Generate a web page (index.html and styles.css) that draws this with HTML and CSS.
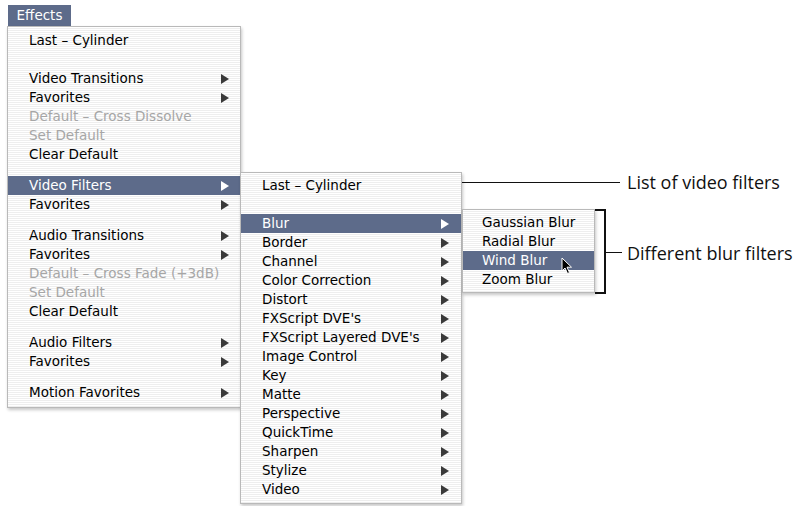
FILE: index.html
```html
<!DOCTYPE html>
<html>
<head>
<meta charset="utf-8">
<link rel="stylesheet" href="styles.css">
</head>
<body>
<div class="canvas">
  <div class="tab">Effects</div>

  <div class="menu menu-main">
    <div class="item">Last – Cylinder</div>
    <div class="blank"></div>
    <div class="item sub">Video Transitions<span class="arr"></span></div>
    <div class="item sub">Favorites<span class="arr"></span></div>
    <div class="item dis">Default – Cross Dissolve</div>
    <div class="item dis">Set Default</div>
    <div class="item">Clear Default</div>
    <div class="sep"></div>
    <div class="item sub hi">Video Filters<span class="arr"></span></div>
    <div class="item sub">Favorites<span class="arr"></span></div>
    <div class="sep"></div>
    <div class="item sub">Audio Transitions<span class="arr"></span></div>
    <div class="item sub">Favorites<span class="arr"></span></div>
    <div class="item dis">Default – Cross Fade (+3dB)</div>
    <div class="item dis">Set Default</div>
    <div class="item">Clear Default</div>
    <div class="sep"></div>
    <div class="item sub">Audio Filters<span class="arr"></span></div>
    <div class="item sub">Favorites<span class="arr"></span></div>
    <div class="sep"></div>
    <div class="item sub">Motion Favorites<span class="arr"></span></div>
  </div>

  <div class="menu menu-filters">
    <div class="item">Last – Cylinder</div>
    <div class="blank2"></div>
    <div class="item sub hi">Blur<span class="arr"></span></div>
    <div class="item sub">Border<span class="arr"></span></div>
    <div class="item sub">Channel<span class="arr"></span></div>
    <div class="item sub">Color Correction<span class="arr"></span></div>
    <div class="item sub">Distort<span class="arr"></span></div>
    <div class="item sub">FXScript DVE's<span class="arr"></span></div>
    <div class="item sub">FXScript Layered DVE's<span class="arr"></span></div>
    <div class="item sub">Image Control<span class="arr"></span></div>
    <div class="item sub">Key<span class="arr"></span></div>
    <div class="item sub">Matte<span class="arr"></span></div>
    <div class="item sub">Perspective<span class="arr"></span></div>
    <div class="item sub">QuickTime<span class="arr"></span></div>
    <div class="item sub">Sharpen<span class="arr"></span></div>
    <div class="item sub">Stylize<span class="arr"></span></div>
    <div class="item sub">Video<span class="arr"></span></div>
  </div>

  <div class="menu menu-blur">
    <div class="item">Gaussian Blur</div>
    <div class="item">Radial Blur</div>
    <div class="item hi">Wind Blur</div>
    <div class="item">Zoom Blur</div>
  </div>

  <svg class="cursor" width="12" height="18" viewBox="0 0 12 18">
    <path d="M1 1 L1 14 L4 11 L6.5 16.5 L8.5 15.5 L6 10.2 L10.5 10.2 Z" fill="#000" stroke="#fff" stroke-width="1"/>
  </svg>

  <div class="callout-line1"></div>
  <div class="callout-text c1">List of video filters</div>

  <div class="bracket"></div>
  <div class="bracket-tick"></div>
  <div class="callout-text c2">Different blur filters</div>
</div>
</body>
</html>
```

FILE: styles.css
```css
html, body {
  margin: 0;
  padding: 0;
  background: #fff;
}
.canvas {
  position: relative;
  width: 796px;
  height: 506px;
  overflow: hidden;
  font-family: "DejaVu Sans", "Liberation Sans", sans-serif;
  font-size: 13.5px;
  color: #000;
}
.tab {
  position: absolute;
  left: 8px;
  top: 5px;
  width: 63px;
  height: 21px;
  box-sizing: border-box;
  background: #5d6b8a;
  color: #fff;
  line-height: 21px;
  text-align: center;
}
.menu {
  position: absolute;
  box-sizing: border-box;
  border: 1px solid #b9b9b9;
  background: repeating-linear-gradient(to bottom, #ffffff 0px, #ffffff 1px, #eeeeee 1px, #eeeeee 2px);
  box-shadow: 1px 2px 3px rgba(0, 0, 0, 0.22);
  display: flex;
  flex-direction: column;
}
.menu-main {
  left: 7px;
  top: 26px;
  width: 234px;
  height: 382px;
  padding: 4px 0 5px;
}
.menu-filters {
  left: 240px;
  top: 172px;
  width: 222px;
  height: 332px;
  padding: 3px 0;
}
.menu-blur {
  left: 462px;
  top: 209px;
  width: 133px;
  height: 84px;
  padding: 3px 0;
}
.item {
  height: 19px;
  line-height: 19px;
  padding-left: 21px;
  padding-right: 11px;
  display: flex;
  align-items: center;
  justify-content: space-between;
  white-space: nowrap;
}
.menu-blur .item {
  padding-left: 19px;
}
.menu-filters .item {
  padding-right: 12px;
}
.item.dis {
  color: #a6a6a6;
}
.item.hi {
  background: #5d6b8a;
  color: #fff;
}
.arr {
  width: 0;
  height: 0;
  border-top: 5px solid transparent;
  border-bottom: 5px solid transparent;
  border-left: 8px solid #3a3a3a;
}
.item.hi .arr {
  border-left-color: #fff;
}
.blank {
  height: 19px;
}
.blank2 {
  height: 19px;
}
.sep {
  height: 12px;
}
.cursor {
  position: absolute;
  left: 561px;
  top: 257px;
}
.callout-line1 {
  position: absolute;
  left: 462px;
  top: 182px;
  width: 158px;
  height: 1px;
  background: #111;
}
.callout-text {
  position: absolute;
  font-family: "Open Sans", "Noto Sans", sans-serif;
  font-size: 18px;
  color: #111;
  line-height: 24px;
  white-space: nowrap;
}
.c1 {
  left: 627px;
  top: 170px;
}
.c2 {
  left: 627px;
  top: 241px;
}
.bracket {
  position: absolute;
  left: 595px;
  top: 209px;
  width: 11px;
  height: 85px;
  box-sizing: border-box;
  border: 2px solid #111;
  border-left: none;
}
.bracket-tick {
  position: absolute;
  left: 606px;
  top: 252px;
  width: 16px;
  height: 1px;
  background: #111;
}
```
